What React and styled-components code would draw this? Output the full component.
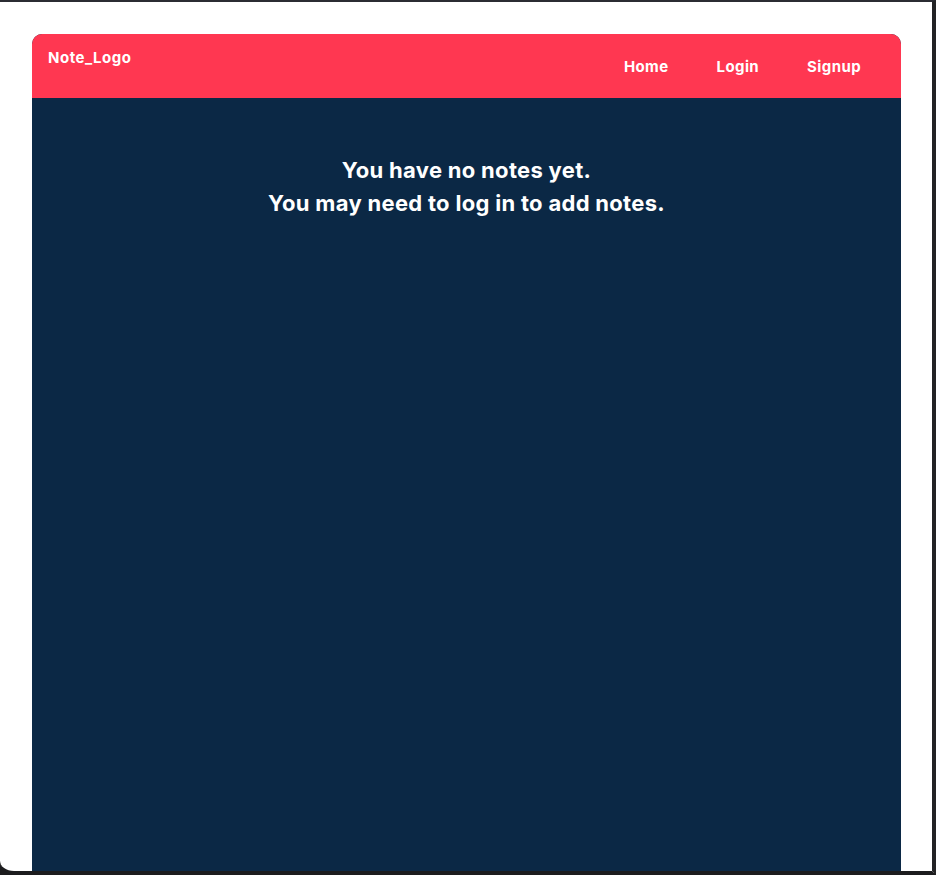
import React from "react";
import styled, { createGlobalStyle } from "styled-components";

const Global = createGlobalStyle`
  html, body { margin: 0; padding: 0; background: #1c1c1e; }
  body { font-family: Inter, "Noto Sans", "Liberation Sans", sans-serif; }
  * { box-sizing: border-box; }
`;

const Frame = styled.div`
  height: 100vh;
  overflow: hidden;
  border-top: 2px solid #2b2c33;
  border-right: 4px solid #232325;
  border-bottom: 4px solid #1c1c1e;
  border-bottom-left-radius: 14px;
  background: #ffffff;
  padding: 32px 31px 0 32px;
`;

const Card = styled.div`
  height: 100%;
  display: flex;
  flex-direction: column;
  border-radius: 10px 10px 0 0;
  overflow: hidden;
  background: #0b2845;
`;

const Header = styled.header`
  height: 64px;
  flex: none;
  display: flex;
  justify-content: space-between;
  align-items: flex-start;
  padding: 0 16px;
  background: #ff3751;
  color: #ffffff;
`;

const Logo = styled.div`
  font-size: 15px;
  font-weight: 700;
  letter-spacing: 0.5px;
  line-height: 18px;
  padding-top: 15px;
`;

const Nav = styled.nav`
  display: flex;
  padding-top: 23px;
`;

const NavLink = styled.a`
  color: #ffffff;
  text-decoration: none;
  font-size: 15px;
  font-weight: 700;
  letter-spacing: 0.4px;
  line-height: 19px;
  padding: 0 24px;
`;

const Main = styled.main`
  flex: 1;
  display: flex;
  flex-direction: column;
  align-items: center;
  padding-top: 56px;
  color: #ffffff;
`;

const Message = styled.h2`
  margin: 0;
  font-size: 22px;
  font-weight: 700;
  letter-spacing: 0.3px;
  line-height: 33px;
  text-align: center;
`;

export default function App() {
  return (
    <>
      <Global />
      <Frame>
        <Card>
          <Header>
            <Logo>Note_Logo</Logo>
            <Nav>
              <NavLink href="#">Home</NavLink>
              <NavLink href="#">Login</NavLink>
              <NavLink href="#">Signup</NavLink>
            </Nav>
          </Header>
          <Main>
            <Message>
              You have no notes yet.
              <br />
              You may need to log in to add notes.
            </Message>
          </Main>
        </Card>
      </Frame>
    </>
  );
}
